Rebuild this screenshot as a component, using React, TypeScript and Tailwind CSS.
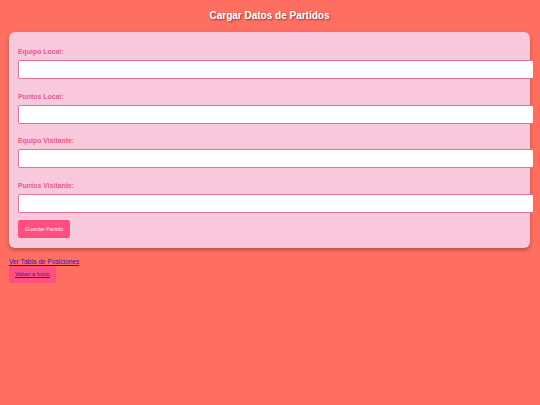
import React from "react";

const fields = ["Equipo Local:", "Puntos Local:", "Equipo Visitante:", "Puntos Visitante:"];

export default function App() {
  return (
    <div className="min-h-screen bg-[#ff6f61] pl-[9px] pr-[10px] pt-[10px] font-['Liberation_Sans',Arial,sans-serif]">
      <h2 className="text-center text-white font-bold text-[10px] leading-[12px] [text-shadow:1px_1px_2px_rgba(0,0,0,0.5)]">
        Cargar Datos de Partidos
      </h2>
      <form className="mt-[10px] bg-[#f8c8dc] rounded-[6px] shadow-[0_2px_4px_rgba(0,0,0,0.3)] pl-[9px] pr-[9px] pt-[16px] pb-[10px]">
        {fields.map((f, i) => (
          <div key={f} className={i < 3 ? "mb-[13.7px]" : "mb-[7px]"}>
            <label className="block text-[6.9px] leading-[8px] font-bold text-[#e85b8a]">{f}</label>
            <input
              type="text"
              className="block mt-[4px] h-[19px] w-[calc(100%+13px)] bg-white border border-[#e2709a] rounded-[2px] outline-none"
            />
          </div>
        ))}
        <button
          type="button"
          className="block h-[18px] px-[7px] bg-[#ff4f80] text-white/85 text-[5.4px] leading-[18px] rounded-[2px]"
        >
          Guardar Partido
        </button>
      </form>
      <div className="mt-[10px] text-[6.6px] leading-[8px]">
        <a href="#" className="text-[#2a12c8] underline">
          Ver Tabla de Posiciones
        </a>
      </div>
      <button
        type="button"
        className="block h-[17px] px-[6px] bg-[#ff4f80] rounded-[2px] text-[5.6px] leading-[17px]"
      >
        <a href="#" className="text-[#3a0fb0] underline">
          Volver a Inicio
        </a>
      </button>
    </div>
  );
}
